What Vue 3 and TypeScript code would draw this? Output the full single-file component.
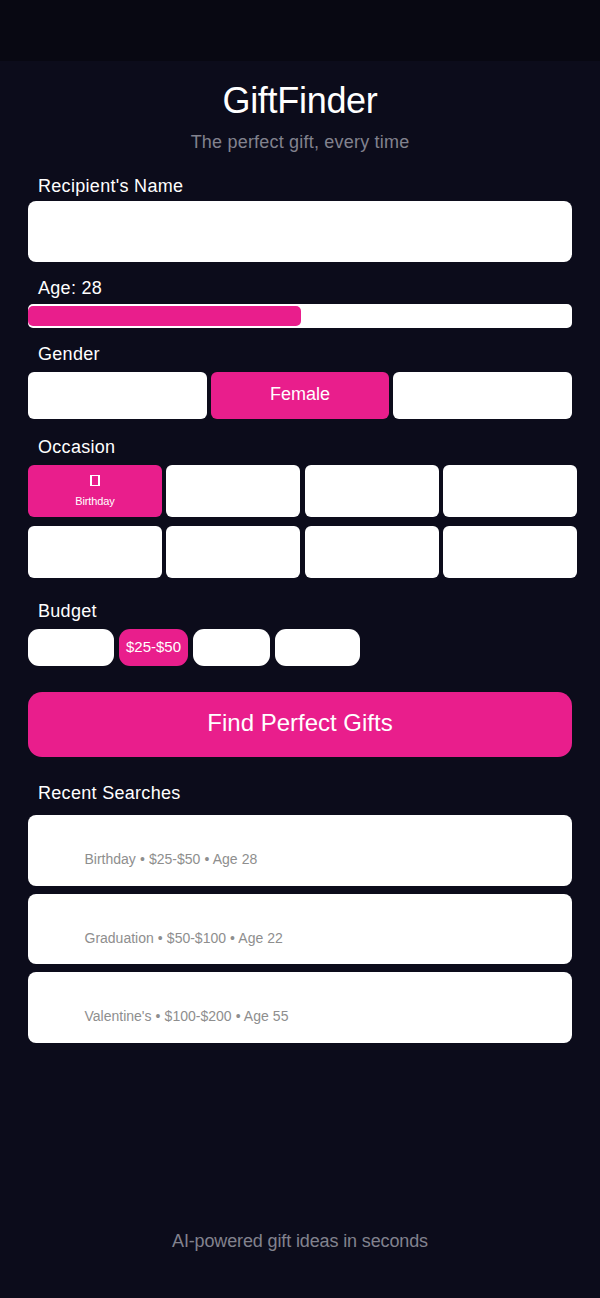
<script setup lang="ts">
const genders = ['', 'Female', '']
const occasions = ['Birthday', '', '', '', '', '', '', '']
const budgets = [
  { label: '', cls: 'b1' },
  { label: '$25-$50', cls: 'b2' },
  { label: '', cls: 'b3' },
  { label: '', cls: 'b4' }
]
const recents = [
  'Birthday • $25-$50 • Age 28',
  'Graduation • $50-$100 • Age 22',
  "Valentine's • $100-$200 • Age 55"
]
</script>

<template>
  <div class="page">
    <div class="status"></div>
    <header class="head">
      <h1>GiftFinder</h1>
      <p>The perfect gift, every time</p>
    </header>

    <div class="label l-name">Recipient's Name</div>
    <div class="input"></div>

    <div class="label l-age">Age: 28</div>
    <div class="track"><div class="fill"></div></div>

    <div class="label l-gender">Gender</div>
    <div class="genders">
      <div v-for="(g, i) in genders" :key="i" class="gender" :class="{ on: g }">{{ g }}</div>
    </div>

    <div class="label l-occ">Occasion</div>
    <div class="occasions">
      <div v-for="(o, i) in occasions" :key="i" class="occ" :class="{ on: o }">
        <template v-if="o">
          <span class="tofu"></span>
          <span class="occ-name">{{ o }}</span>
        </template>
      </div>
    </div>

    <div class="label l-budget">Budget</div>
    <div class="budgets">
      <div v-for="b in budgets" :key="b.cls" class="budget" :class="[b.cls, { on: b.label }]">{{ b.label }}</div>
    </div>

    <div class="cta">Find Perfect Gifts</div>

    <div class="label l-recent">Recent Searches</div>
    <div class="recents">
      <div v-for="r in recents" :key="r" class="recent">{{ r }}</div>
    </div>

    <footer class="foot">AI-powered gift ideas in seconds</footer>
  </div>
</template>

<style>
html, body { margin: 0; background: #0c0c1b; }
</style>

<style scoped>
.page {
  box-sizing: border-box;
  width: 600px;
  height: 1298px;
  background: #0c0c1b;
  color: #fff;
  font-family: "Liberation Sans", Arial, sans-serif;
  display: flex;
  flex-direction: column;
  padding: 0 28px;
  overflow: hidden;
}
.status { height: 61px; margin: 0 -28px; background: #080812; flex: none; }
.head { text-align: center; padding-top: 19px; }
.head h1 { margin: 0; font-size: 36px; line-height: 42px; font-weight: 400; letter-spacing: -0.3px; }
.head p { margin: 9px 0 0; font-size: 18px; line-height: 22px; color: #82828e; letter-spacing: 0.2px; }

.label { font-size: 18px; line-height: 22px; padding-left: 10px; margin-bottom: 4px; letter-spacing: 0.3px; }
.l-name { margin-top: 22px; }
.l-age { margin-top: 15px; margin-bottom: 5px; }
.l-gender { margin-top: 15px; margin-bottom: 7px; }
.l-occ { margin-top: 17px; margin-bottom: 7px; }
.l-budget { margin-top: 22px; margin-bottom: 7px; }
.l-recent { margin-top: 25px; margin-bottom: 11px; }

.input { height: 61px; background: #fff; border-radius: 8px; }
.track { height: 24px; background: #fff; border-radius: 5px; padding: 2px 0; box-sizing: border-box; }
.fill { width: 273px; height: 20px; background: #e91e8c; border-radius: 5px; }

.genders { display: flex; gap: 4px; }
.gender {
  box-sizing: border-box;
  flex: 1;
  height: 47px;
  padding-bottom: 2px;
  border-radius: 6px;
  background: #fff;
  display: flex;
  align-items: center;
  justify-content: center;
  font-size: 18px;
}
.gender.on { background: #e91e8c; }

.occasions {
  display: grid;
  grid-template-columns: repeat(4, 134px);
  column-gap: 4.3px;
  row-gap: 9px;
}
.occ {
  height: 52px;
  border-radius: 6px;
  background: #fff;
  display: flex;
  flex-direction: column;
  align-items: center;
}
.occ.on { background: #e91e8c; }
.tofu {
  box-sizing: border-box;
  width: 10px;
  height: 11px;
  margin-top: 10px;
  border: 2px solid #fff;
  border-width: 1.6px 2px;
}
.occ-name { font-size: 11px; line-height: 13px; margin-top: 9px; letter-spacing: -0.1px; }

.budgets { display: flex; gap: 5px; }
.budget {
  box-sizing: border-box;
  height: 37px;
  padding-bottom: 3px;
  border-radius: 11px;
  background: #fff;
  display: flex;
  align-items: center;
  justify-content: center;
  font-size: 15px;
}
.budget.on { background: #e91e8c; }
.b1 { width: 86px; }
.b2 { width: 69px; }
.b3 { width: 77px; }
.b4 { width: 85px; }

.cta {
  box-sizing: border-box;
  margin-top: 26px;
  height: 65px;
  padding-bottom: 4px;
  border-radius: 14px;
  background: #e91e8c;
  display: flex;
  align-items: center;
  justify-content: center;
  font-size: 24px;
}

.recents { display: flex; flex-direction: column; gap: 8px; }
.recent {
  box-sizing: border-box;
  height: 70.67px;
  background: #fff;
  border-radius: 8px;
  padding: 36px 0 0 56.5px;
  font-size: 14px;
  line-height: 17px;
  color: #8e8e8e;
  word-spacing: 0.2px;
}

.foot {
  margin-top: auto;
  padding-bottom: 46px;
  text-align: center;
  font-size: 18px;
  line-height: 22px;
  color: #82828e;
  letter-spacing: -0.13px;
}
</style>
